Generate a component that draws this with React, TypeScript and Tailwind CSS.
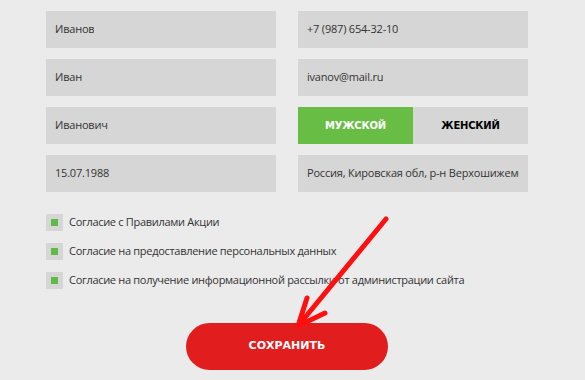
import { useState } from "react";

const fields = [
  ["Иванов", "+7 (987) 654-32-10"],
  ["Иван", "ivanov@mail.ru"],
  ["Иванович", null],
  ["15.07.1988", "Россия, Кировская обл, р-н Верхошижемский"],
];

const agreements = [
  "Согласие с Правилами Акции",
  "Согласие на предоставление персональных данных",
  "Согласие на получение информационной рассылки от администрации сайта",
];

function Field({ value }: { value: string }) {
  return (
    <div className="h-[37px] bg-[#d6d6d6] pl-[9px] pr-[9px] flex items-center overflow-hidden">
      <span className="text-[11px] tracking-[-0.2px] text-[#333] whitespace-nowrap overflow-hidden">{value}</span>
    </div>
  );
}

export default function App() {
  const [gender, setGender] = useState<"m" | "f">("m");

  return (
    <div
      className="relative w-[585px] h-[380px] bg-[#ebebeb] overflow-hidden"
      style={{ fontFamily: '"Open Sans", "Liberation Sans", sans-serif' }}
    >
      <div className="pt-[11px] pl-[46px] w-[528px]">
        {/* Form fields */}
        <div className="grid grid-cols-[230px_230px] gap-x-[22px] gap-y-[11px]">
          {fields.map(([left, right], i) => (
            <>
              <Field key={`l${i}`} value={left as string} />
              {right ? (
                <Field key={`r${i}`} value={right} />
              ) : (
                <div key="gender" className="h-[37px] grid grid-cols-2">
                  <button
                    onClick={() => setGender("m")}
                    className={`text-[10px] tracking-[-0.2px] font-bold uppercase ${
                      gender === "m" ? "bg-[#68bd45] text-white" : "bg-[#d6d6d6] text-black"
                    }`}
                    style={{ fontFamily: '"DejaVu Sans", sans-serif' }}
                  >
                    Мужской
                  </button>
                  <button
                    onClick={() => setGender("f")}
                    className={`text-[10px] tracking-[-0.2px] font-bold uppercase ${
                      gender === "f" ? "bg-[#68bd45] text-white" : "bg-[#d6d6d6] text-black"
                    }`}
                    style={{ fontFamily: '"DejaVu Sans", sans-serif' }}
                  >
                    Женский
                  </button>
                </div>
              )}
            </>
          ))}
        </div>

        {/* Agreements */}
        <div className="mt-[22px] flex flex-col gap-[12px]">
          {agreements.map((text) => (
            <label key={text} className="flex items-center gap-[6px] h-[17px]">
              <span className="w-[17px] h-[17px] bg-[#d6d6d6] flex items-center justify-center shrink-0">
                <span className="w-[7px] h-[7px] bg-[#5dbb46]" />
              </span>
              <span className="text-[11px] tracking-[-0.3px] text-[#333] whitespace-nowrap">{text}</span>
            </label>
          ))}
        </div>

        {/* Save */}
        <div className="mt-[34px] flex justify-center">
          <button
            className="w-[202px] h-[47px] rounded-full bg-[#e21d1d] text-white text-[11px] font-bold uppercase"
            style={{ fontFamily: '"DejaVu Sans", sans-serif' }}
          >
            Сохранить
          </button>
        </div>
      </div>

      {/* Annotation arrow */}
      <svg className="absolute left-0 top-0 pointer-events-none" width="585" height="380">
        <g stroke="#ff1010" strokeWidth="5" strokeLinecap="round" fill="none">
          <path d="M386 219 L298 326" />
          <path d="M298 326 L307 298" />
          <path d="M298 326 L325 313" />
        </g>
      </svg>
    </div>
  );
}
